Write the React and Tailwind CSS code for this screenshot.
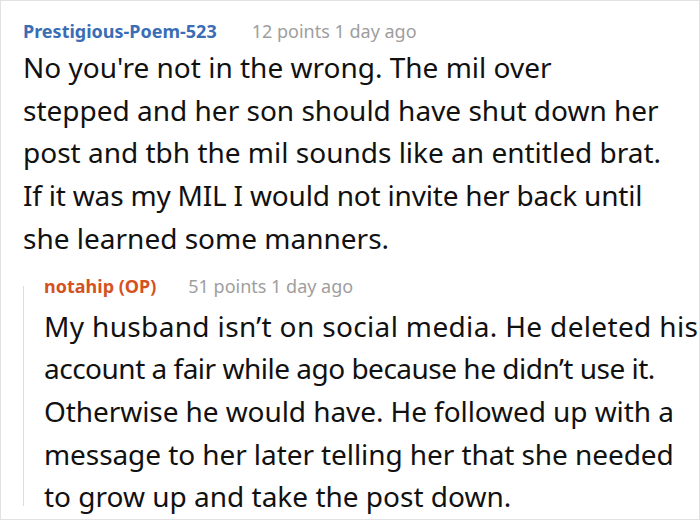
export default function App() {
  const body = "text-[28px] leading-[42.7px] text-[#111] whitespace-nowrap";
  return (
    <div className="w-[700px] h-[520px] bg-white border border-[#e2e2e2] overflow-hidden" style={{ fontFamily: '"Noto Sans", sans-serif' }}>
      <div className="pl-[22px] pt-[15px]">
        <div className="flex items-baseline text-[18px] leading-[30px]">
          <span className="font-bold text-[#3a6db5]">Prestigious-Poem-523</span>
          <span className="ml-[35px] text-[#9e9e9e]">12 points 1 day ago</span>
        </div>
        <div className={body}>
          <div>No you're not in the wrong. The mil over</div>
          <div>stepped and her son should have shut down her</div>
          <div>post and tbh the mil sounds like an entitled brat.</div>
          <div className="tracking-[-0.2px]">If it was my MIL I would not invite her back until</div>
          <div>she learned some manners.</div>
        </div>
        <div className="mt-[11px] flex">
          <div className="w-px bg-[#dcdcdc] mt-[15px] mb-[12px] shrink-0"></div>
          <div className="pl-[20px]">
            <div className="flex items-baseline text-[18px] leading-[30px]">
              <span className="font-bold text-[#d4521f]">notahip (OP)</span>
              <span className="ml-[32px] text-[#9e9e9e]">51 points 1 day ago</span>
            </div>
            <div className={body + " mt-[4px]"}>
              <div className="tracking-[0.35px]">My husband isn’t on social media. He deleted his</div>
              <div className="tracking-[-0.5px]">account a fair while ago because he didn’t use it.</div>
              <div className="tracking-[-0.08px]">Otherwise he would have. He followed up with a</div>
              <div className="tracking-[-0.08px]">message to her later telling her that she needed</div>
              <div>to grow up and take the post down.</div>
            </div>
          </div>
        </div>
      </div>
    </div>
  );
}
